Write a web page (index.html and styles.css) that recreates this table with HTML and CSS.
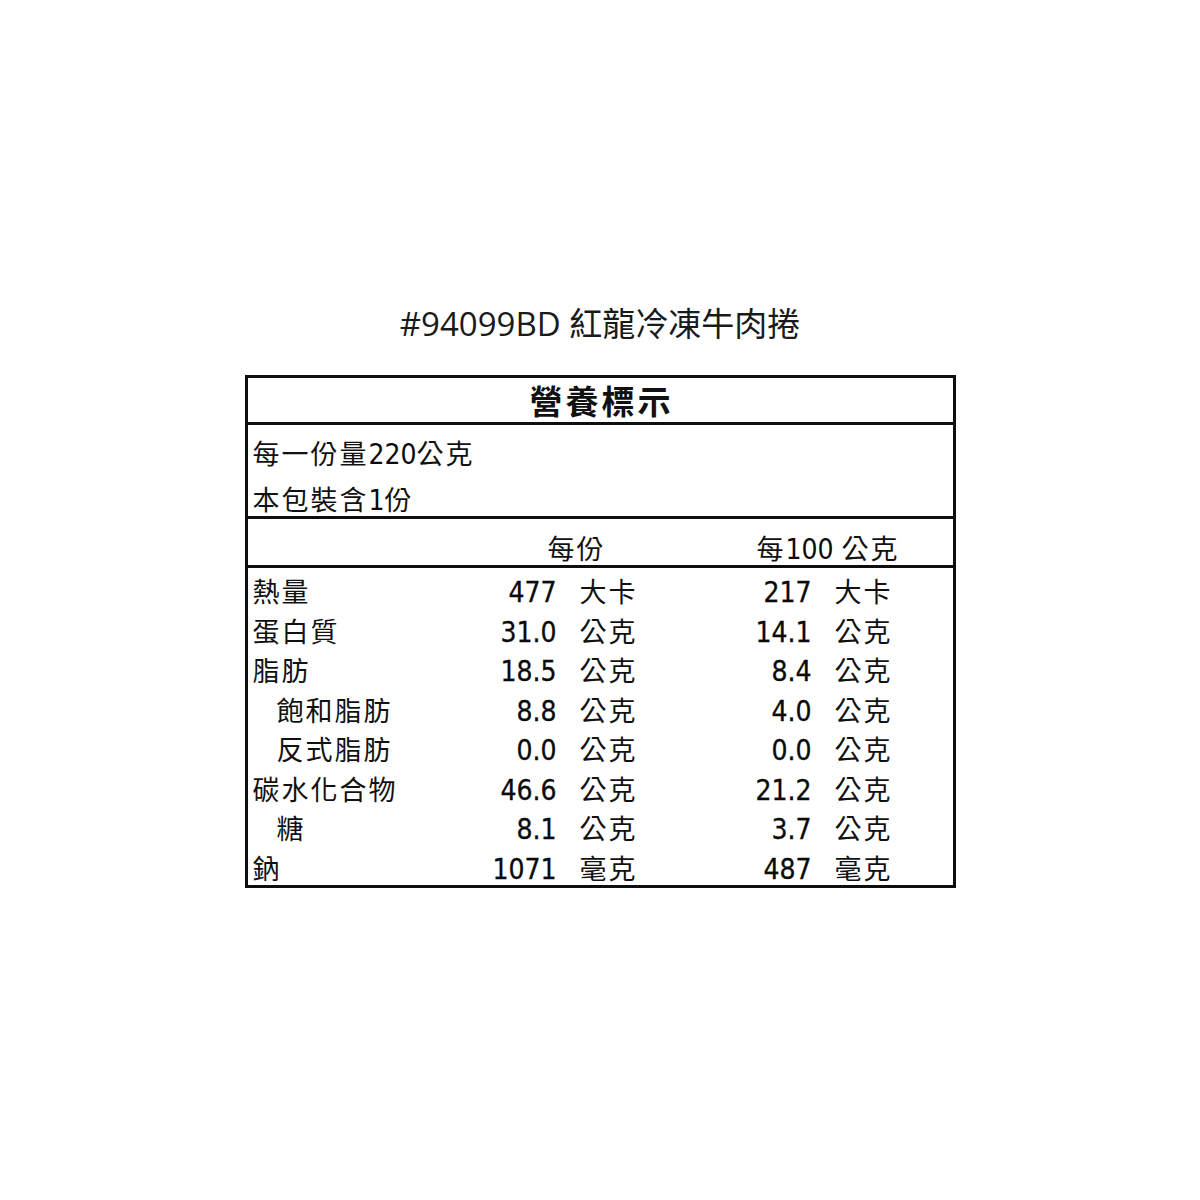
FILE: index.html
```html
<!DOCTYPE html>
<html lang="zh-Hant">
<head>
<meta charset="utf-8">
<title>#94099BD 紅龍冷凍牛肉捲</title>
<link rel="stylesheet" href="styles.css">
</head>
<body>
<main class="page">
  <h1 class="title">#94099BD 紅龍冷凍牛肉捲</h1>
  <section class="label">
    <div class="label-head">營養標示</div>
    <div class="serving">
      <div class="serving-line">每一份量<span class="num">220</span>公克</div>
      <div class="serving-line">本包裝含<span class="num">1</span>份</div>
    </div>
    <div class="col-head">
      <div class="ch ch-1">每份</div>
      <div class="ch ch-2">每<span class="num">100 </span>公克</div>
    </div>
    <div class="rows">
      <div class="row"><div class="name">熱量</div><div class="val num">477</div><div class="unit">大卡</div><div class="val num">217</div><div class="unit">大卡</div></div>
      <div class="row"><div class="name">蛋白質</div><div class="val num">31.0</div><div class="unit">公克</div><div class="val num">14.1</div><div class="unit">公克</div></div>
      <div class="row"><div class="name">脂肪</div><div class="val num">18.5</div><div class="unit">公克</div><div class="val num">8.4</div><div class="unit">公克</div></div>
      <div class="row"><div class="name sub">飽和脂肪</div><div class="val num">8.8</div><div class="unit">公克</div><div class="val num">4.0</div><div class="unit">公克</div></div>
      <div class="row"><div class="name sub">反式脂肪</div><div class="val num">0.0</div><div class="unit">公克</div><div class="val num">0.0</div><div class="unit">公克</div></div>
      <div class="row"><div class="name">碳水化合物</div><div class="val num">46.6</div><div class="unit">公克</div><div class="val num">21.2</div><div class="unit">公克</div></div>
      <div class="row"><div class="name sub">糖</div><div class="val num">8.1</div><div class="unit">公克</div><div class="val num">3.7</div><div class="unit">公克</div></div>
      <div class="row"><div class="name">鈉</div><div class="val num">1071</div><div class="unit">毫克</div><div class="val num">487</div><div class="unit">毫克</div></div>
    </div>
  </section>
</main>
</body>
</html>
```
FILE: styles.css
```css
html, body {
  margin: 0;
  padding: 0;
  background: #ffffff;
}

body {
  width: 1200px;
  height: 1200px;
  color: #111111;
  font-family: "DejaVu Sans Condensed", "DejaVu Sans", "Noto Sans CJK TC", sans-serif;
}

.page {
  padding-top: 304px;
  display: flex;
  flex-direction: column;
  align-items: center;
}

.title {
  margin: 0;
  height: 40px;
  line-height: 40px;
  font-family: "Open Sans", "Noto Sans CJK TC", sans-serif;
  font-weight: 400;
  font-size: 33px;
  color: #1a1a1a;
  letter-spacing: 0;
}

.label {
  margin-top: 31px;
  width: 711px;
  height: 513px;
  box-sizing: border-box;
  border: 3px solid #0e0e0e;
  font-family: "Noto Sans CJK TC", sans-serif;
  font-size: 27px;
  letter-spacing: 2px;
}

.num {
  font-family: "DejaVu Sans Condensed", "DejaVu Sans", sans-serif;
  font-stretch: condensed;
  font-size: 28px;
  letter-spacing: 0;
  color: #0a0a0a;
}

.label-head {
  height: 47px;
  box-sizing: border-box;
  border-bottom: 3px solid #0e0e0e;
  text-align: center;
  line-height: 44px;
  font-weight: 700;
  font-size: 33px;
  letter-spacing: 3px;
  padding-left: 3px;
}

.serving {
  height: 94px;
  box-sizing: border-box;
  border-bottom: 3px solid #0e0e0e;
  padding: 5px 0 0 5px;
}

.serving-line {
  height: 46px;
  line-height: 46px;
}

.col-head {
  height: 49px;
  box-sizing: border-box;
  border-bottom: 3px solid #0e0e0e;
  display: grid;
  grid-template-columns: 229px 224px 1fr;
  padding-top: 6px;
  line-height: 46px;
}

.ch-1 {
  grid-column: 2;
  padding-left: 71px;
}

.ch-2 {
  grid-column: 3;
  padding-left: 56px;
}

.rows {
  padding-top: 1px;
}

.row {
  display: grid;
  grid-template-columns: 229px 80px 144px 111px 1fr;
  height: 39.5px;
  line-height: 39.5px;
  align-items: center;
}

.name {
  padding-left: 5px;
  white-space: nowrap;
}

.name.sub {
  padding-left: 29px;
}

.val {
  text-align: right;
  white-space: nowrap;
  padding-top: 4px;
  -webkit-text-stroke: 0.3px #0a0a0a;
}

.unit {
  padding-left: 23px;
  white-space: nowrap;
}
```
